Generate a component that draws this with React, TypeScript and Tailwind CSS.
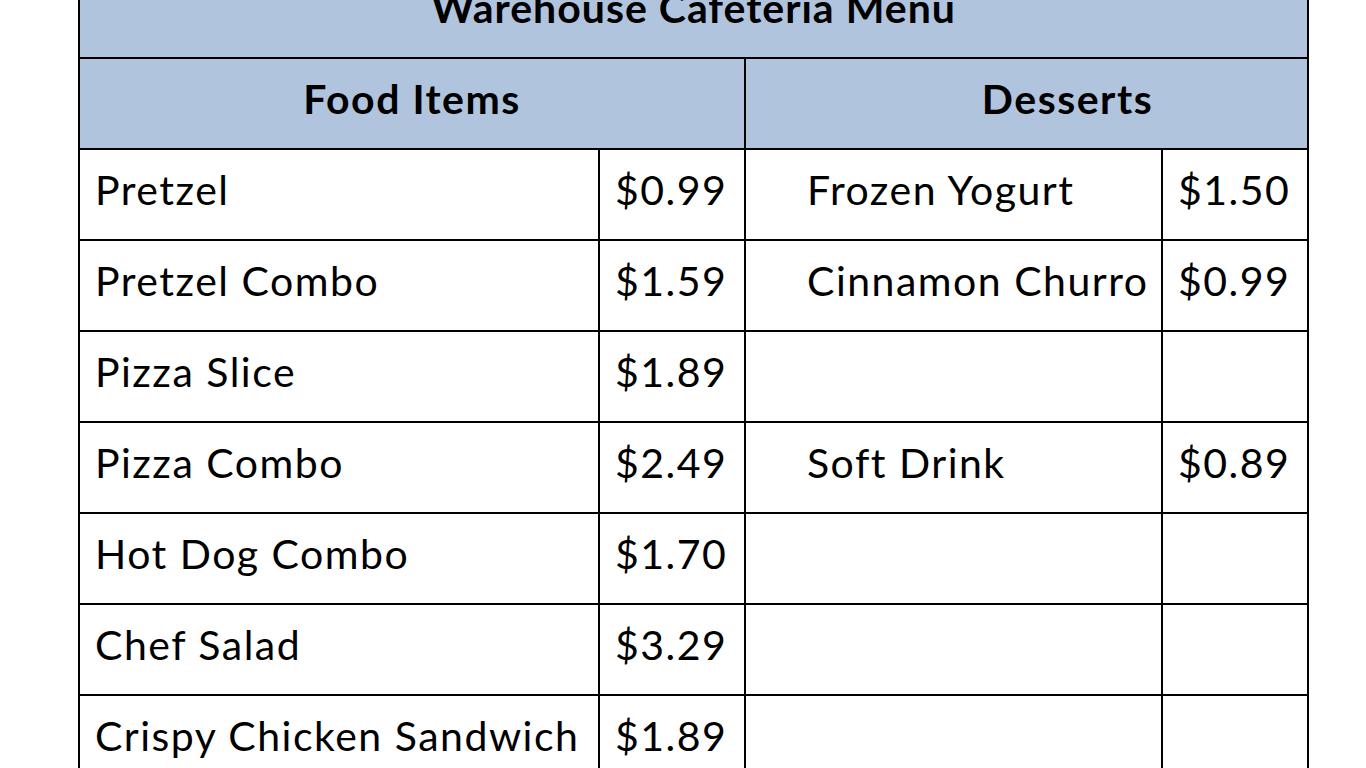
const food: [string, string][] = [
  ["Pretzel", "$0.99"],
  ["Pretzel Combo", "$1.59"],
  ["Pizza Slice", "$1.89"],
  ["Pizza Combo", "$2.49"],
  ["Hot Dog Combo", "$1.70"],
  ["Chef Salad", "$3.29"],
  ["Crispy Chicken Sandwich", "$1.89"],
];

const desserts: [string, string][] = [
  ["Frozen Yogurt", "$1.50"],
  ["Cinnamon Churro", "$0.99"],
  ["", ""],
  ["Soft Drink", "$0.89"],
  ["", ""],
  ["", ""],
  ["", ""],
];

export default function App() {
  return (
    <div className="h-[768px] w-[1366px] overflow-hidden bg-white font-['Lato',sans-serif] text-black">
      <table className="ml-[78px] mt-[-34px] w-[1230px] table-fixed border-collapse text-[41px] tracking-[1.5px]">
        <colgroup>
          <col className="w-[520px]" />
          <col className="w-[146px]" />
          <col className="w-[417px]" />
          <col className="w-[146px]" />
        </colgroup>
        <tbody>
          <tr className="h-[91px] bg-[#b0c4de]">
            <td colSpan={4} className="border-2 border-black pb-[10px] text-center font-bold tracking-[1px]">
              Warehouse Cafeteria Menu
            </td>
          </tr>
          <tr className="h-[91px] bg-[#b0c4de]">
            <td colSpan={2} className="border-2 border-black pb-[10px] text-center font-bold">
              Food Items
            </td>
            <td colSpan={2} className="border-2 border-black pb-[10px] pl-[82px] text-center font-bold">
              Desserts
            </td>
          </tr>
          {food.map(([name, price], i) => (
            <tr key={name} className="h-[91px]">
              <td className="whitespace-nowrap border-2 border-black pb-[10px] pl-[15px]">{name}</td>
              <td className="border-2 border-black pb-[10px] pl-[15px]">{price}</td>
              <td className="whitespace-nowrap border-2 border-black pb-[10px] pl-[61px]">{desserts[i][0]}</td>
              <td className="border-2 border-black pb-[10px] pl-[15px]">{desserts[i][1]}</td>
            </tr>
          ))}
        </tbody>
      </table>
    </div>
  );
}
